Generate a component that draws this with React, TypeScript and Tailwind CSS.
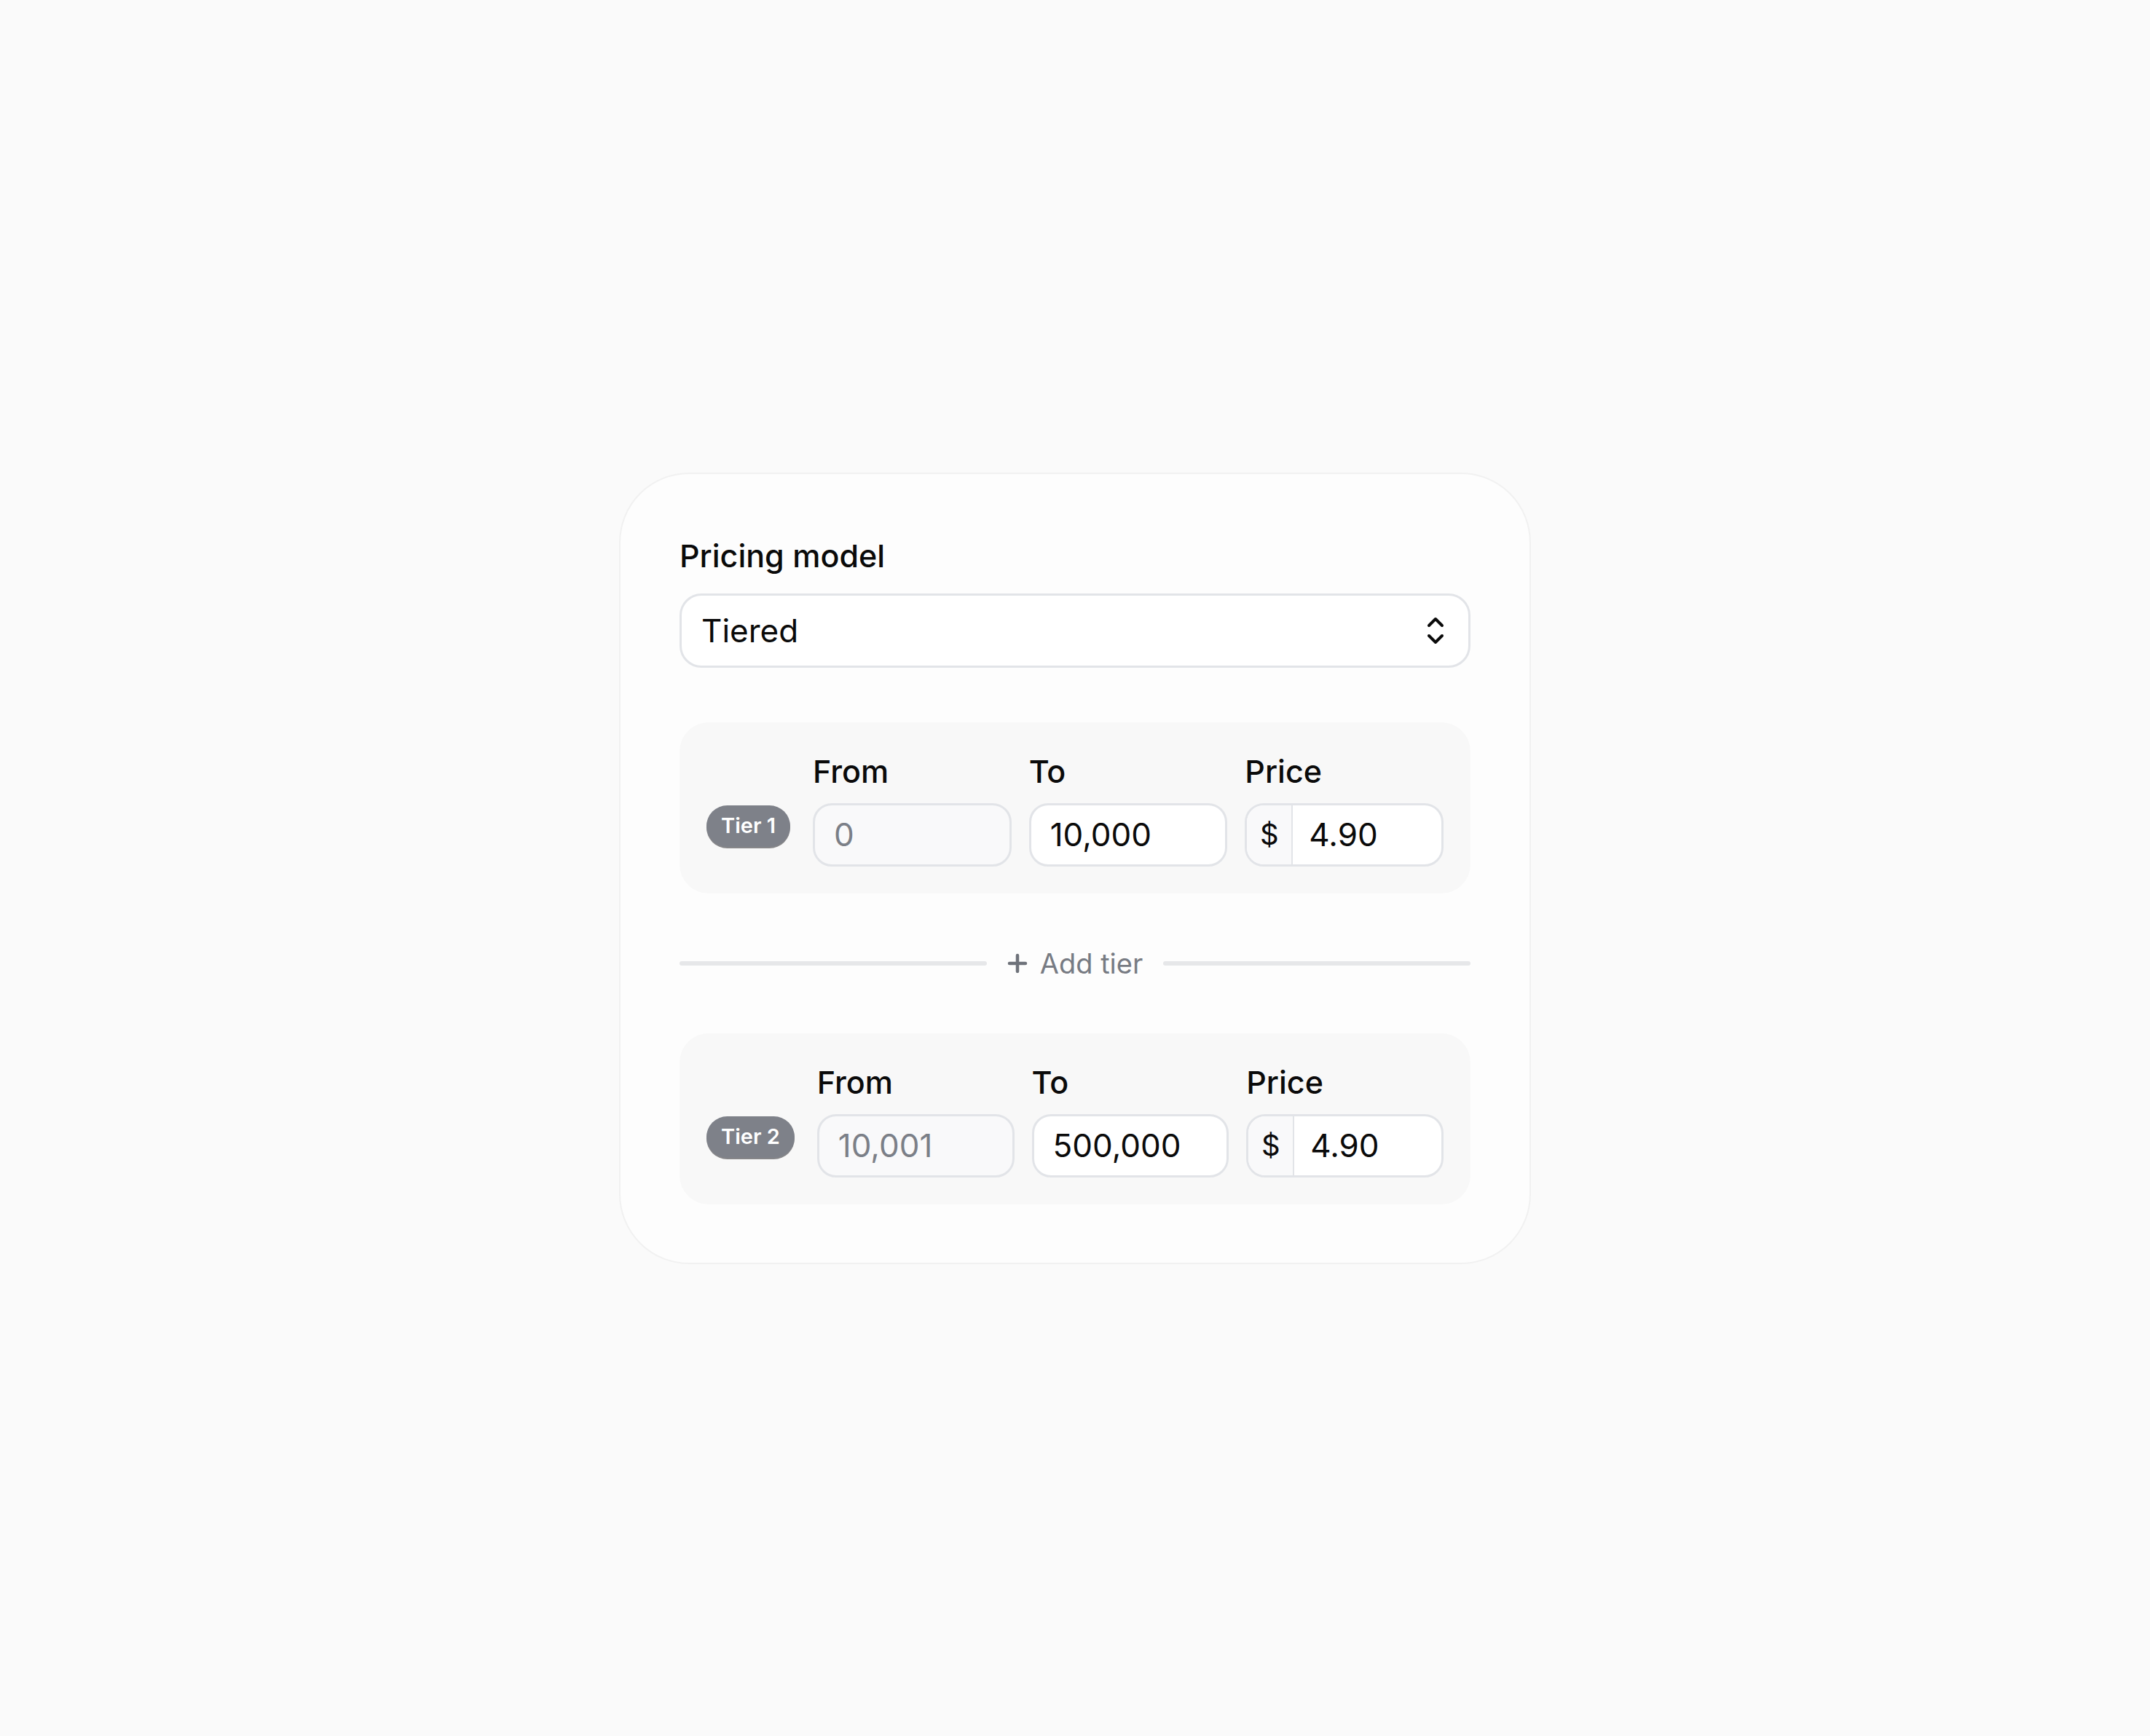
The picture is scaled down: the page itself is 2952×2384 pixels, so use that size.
import React from 'react';

type TierRow = {
  name: string;
  from: string;
  to: string;
  price: string;
};

const tiers: TierRow[] = [
  { name: 'Tier 1', from: '0', to: '10,000', price: '4.90' },
  { name: 'Tier 2', from: '10,001', to: '500,000', price: '4.90' },
];

const font = { fontFamily: 'Inter, "Noto Sans", sans-serif' };

function UpDownIcon() {
  return (
    <svg width="24" height="38" viewBox="0 0 24 38" fill="none" className="shrink-0">
      <path d="M3 12 L12 3 L21 12" stroke="#0a0a0a" strokeWidth="4" strokeLinecap="round" strokeLinejoin="round" />
      <path d="M3 26 L12 35 L21 26" stroke="#0a0a0a" strokeWidth="4" strokeLinecap="round" strokeLinejoin="round" />
    </svg>
  );
}

function PlusIcon() {
  return (
    <svg width="28" height="28" viewBox="0 0 28 28" fill="none" className="shrink-0">
      <path d="M14 3 V25 M3 14 H25" stroke="#6e727a" strokeWidth="4.5" strokeLinecap="round" />
    </svg>
  );
}

function TierPanel({ tier }: { tier: TierRow }) {
  return (
    <div className="flex items-end rounded-[40px] bg-[#f8f8f8] px-[37px] pt-[42px] pb-[37px]">
      {/* badge */}
      <div className="mr-[31px] mb-[27px] flex h-[57px] items-center rounded-full bg-[#7e8189] px-[20px] text-[29px] font-semibold text-white shadow-[0_2px_0_rgba(40,40,45,0.55)]">
        {tier.name}
      </div>

      <div className="grid flex-1 grid-cols-3 gap-x-[24px]">
        <div className="flex flex-col">
          <span className="text-[43px] leading-[50px] font-medium text-[#0a0a0a]">From</span>
          <div className="mt-[19px] flex h-[87px] items-center rounded-[26px] border-[3px] border-[#e2e4e8] bg-[#f9f9fa] px-[26px] text-[44px] text-[#7b7f87]">
            {tier.from}
          </div>
        </div>
        <div className="flex flex-col">
          <span className="text-[43px] leading-[50px] font-medium text-[#0a0a0a]">To</span>
          <div className="mt-[19px] flex h-[87px] items-center rounded-[26px] border-[3px] border-[#e2e4e8] bg-white px-[26px] text-[44px] text-[#0a0a0a]">
            {tier.to}
          </div>
        </div>
        <div className="flex flex-col">
          <span className="text-[43px] leading-[50px] font-medium text-[#0a0a0a]">Price</span>
          <div className="mt-[19px] flex h-[87px] overflow-hidden rounded-[26px] border-[3px] border-[#e2e4e8] bg-white text-[44px] text-[#0a0a0a]">
            <div className="flex w-[63px] shrink-0 items-center justify-center border-r-2 border-[#e2e4e8] bg-[#f9f9fa] text-[40px]">
              $
            </div>
            <div className="flex items-center px-[22px]">{tier.price}</div>
          </div>
        </div>
      </div>
    </div>
  );
}

export default function App() {
  return (
    <div className="flex h-screen w-full items-center justify-center bg-[#fafafa]" style={font}>
      <div className="w-[1252px] rounded-[96px] border-2 border-[#f1f1f1] bg-[#fdfdfd] px-[81px] pt-[87px] pb-[80px]">
        <div className="text-[43px] leading-[50px] font-medium text-[#0a0a0a]">Pricing model</div>

        {/* select */}
        <div className="mt-[27px] flex h-[102px] items-center justify-between rounded-[30px] border-[3px] border-[#e2e4e8] bg-white pr-[33px] pl-[27px]">
          <span className="text-[44px] text-[#0a0a0a]">Tiered</span>
          <UpDownIcon />
        </div>

        <div className="mt-[75px]">
          <TierPanel tier={tiers[0]} />
        </div>

        {/* add tier divider */}
        <div className="my-[72px] flex items-center gap-[28px]">
          <div className="h-[6px] flex-1 rounded-full bg-[#e6e7e9]" />
          <button type="button" className="flex items-center gap-[17px] text-[38px] leading-[48px] text-[#777b83]">
            <PlusIcon />
            Add tier
          </button>
          <div className="h-[6px] flex-1 rounded-full bg-[#e6e7e9]" />
        </div>

        <TierPanel tier={tiers[1]} />
      </div>
    </div>
  );
}
